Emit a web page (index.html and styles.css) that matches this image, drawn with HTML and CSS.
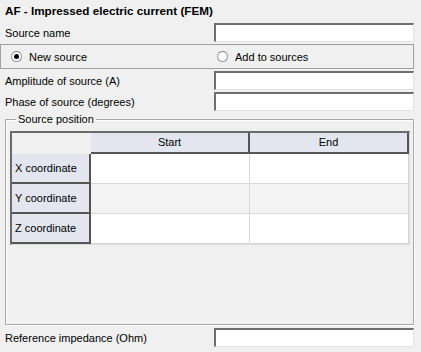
FILE: index.html
```html
<!DOCTYPE html>
<html>

<head>
	<title>AF - Impressed electric current (FEM)</title>
	<link rel="stylesheet" href="styles.css">
</head>

<body>
	<div class="panel">
		<div class="title">AF - Impressed electric current (FEM)</div>

		<div class="row">
			<label for="sourceName">Source name</label>
			<input type="text" id="sourceName" class="field">
		</div>

		<!-- Chọn nguồn mới hoặc thêm vào danh sách -->
		<div class="radio-box">
			<span class="radio checked"><i></i>New source</span>
			<span class="radio"><i></i>Add to sources</span>
		</div>

		<div class="row">
			<label for="amplitude">Amplitude of source (A)</label>
			<input type="text" id="amplitude" class="field">
		</div>
		<div class="row">
			<label for="phase">Phase of source (degrees)</label>
			<input type="text" id="phase" class="field">
		</div>

		<fieldset class="group">
			<legend>Source position</legend>
			<div class="grid">
				<div class="corner"></div>
				<div class="col-head">Start</div>
				<div class="col-head">End</div>

				<div class="row-head">X coordinate</div>
				<div class="cell"></div>
				<div class="cell"></div>

				<div class="row-head">Y coordinate</div>
				<div class="cell odd"></div>
				<div class="cell odd"></div>

				<div class="row-head">Z coordinate</div>
				<div class="cell"></div>
				<div class="cell"></div>

				<div class="filler-head"></div>
				<div class="filler"></div>
			</div>
		</fieldset>

		<div class="row">
			<label for="impedance">Reference impedance (Ohm)</label>
			<input type="text" id="impedance" class="field">
		</div>
	</div>
</body>

</html>
```

FILE: styles.css
```css
body {
	margin: 0;
	background-color: #f0f0f0;
	font-family: "Liberation Sans", Arial, sans-serif;
	font-size: 11px;
	color: #000;
}

.panel {
	width: 414px;
	height: 352px;
	display: flex;
	flex-direction: column;
}

.title {
	height: 21px;
	line-height: 21px;
	padding-left: 5px;
	font-size: 11.7px;
	font-weight: bold;
}

.row {
	display: flex;
	align-items: center;
	justify-content: space-between;
	height: 19px;
	padding-left: 5px;
	margin-top: 2px;
}

.field {
	box-sizing: border-box;
	width: 200px;
	height: 19px;
	margin: 0;
	padding: 0 3px;
	background-color: #fff;
	border-style: solid;
	border-width: 2px 1px 1px 2px;
	border-color: #6e6e6e #e3e3e3 #e3e3e3 #6e6e6e;
}

/* Nhóm radio */
.radio-box {
	box-sizing: border-box;
	height: 25px;
	margin-top: 2px;
	border: 1px solid #a0a0a0;
	display: flex;
	align-items: center;
}

.radio {
	display: flex;
	align-items: center;
	width: 202px;
	padding-left: 10px;
}

.radio i {
	box-sizing: border-box;
	width: 11px;
	height: 11px;
	margin-right: 7px;
	border-radius: 50%;
	border: 1px solid #9a9a9a;
	border-top-color: #7a7a7a;
	background-color: #fff;
	position: relative;
}

.radio.checked i::after {
	content: "";
	position: absolute;
	left: 2px;
	top: 2px;
	width: 5px;
	height: 5px;
	border-radius: 50%;
	background-color: #000;
}

/* Khung vị trí nguồn */
.group {
	margin: 2px 0 0 5px;
	padding: 6px 3px 3px 4px;
	border: 1px solid #a9a9a9;
	box-shadow: inset 1px 1px 0 #fff, 1px 1px 0 #fff;
	height: 212px;
	box-sizing: border-box;
	width: 409px;
	display: flex;
}

.group legend {
	padding: 0 2px;
	margin-left: 6px;
}

.grid {
	flex: 1;
	display: grid;
	grid-template-columns: 79px 159px 1fr;
	grid-template-rows: 21px 30px 30px 30px 1fr;
	border-style: solid;
	border-width: 2px 1px 1px 2px;
	border-color: #6a6a6a #dcdcdc #dcdcdc #6a6a6a;
	background-color: #fff;
}

.corner {
	background-color: #f0f0f0;
}

.col-head {
	background-color: #e3e6ee;
	border-right: 2px solid #555;
	border-bottom: 2px solid #555;
	text-align: center;
	line-height: 19px;
}

.row-head {
	background-color: #e3e6ee;
	border-right: 2px solid #555;
	border-bottom: 2px solid #555;
	padding-left: 3px;
	line-height: 28px;
}

.cell {
	border-right: 1px solid #d8d8d8;
	border-bottom: 1px solid #d8d8d8;
}

.cell.odd {
	background-color: #f3f3f3;
}

.filler-head {
	background-color: #ececec;
}

.filler {
	grid-column: span 2;
}

.group + .row {
	margin-top: 3px;
}
```
